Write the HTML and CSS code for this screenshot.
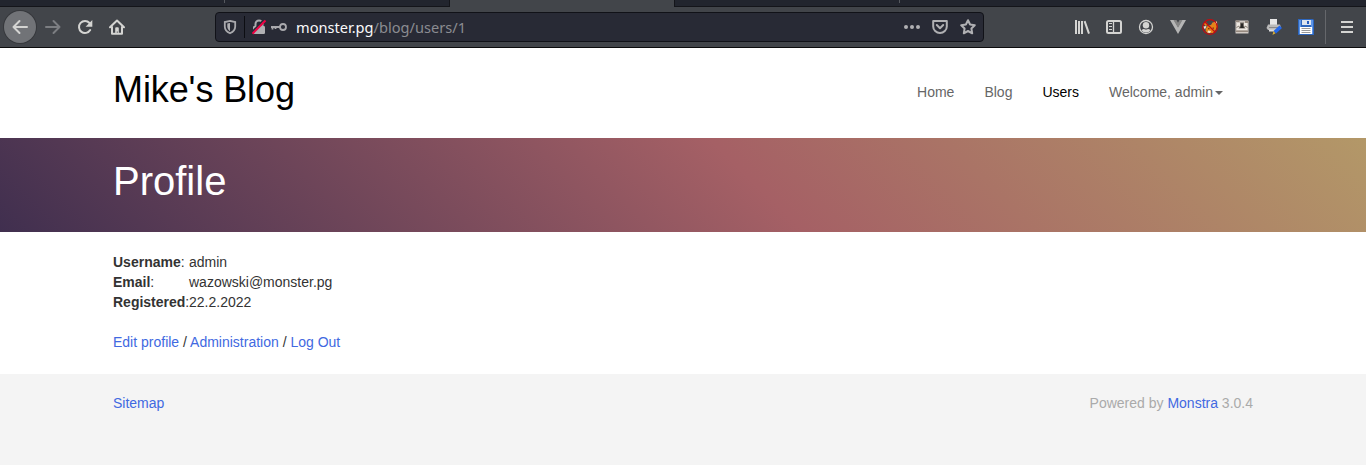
FILE: index.html
```html
<!DOCTYPE html>
<html lang="en">
<head>
<meta charset="utf-8">
<title>Mike's Blog - Profile</title>
<link rel="stylesheet" href="styles.css">
</head>
<body>
<div class="browser">
  <div class="tabs"><span class="tab tab-a"></span><span class="tab tab-b"></span><span class="tab tab-active"></span><span class="tab tab-c"></span><span class="tab tab-rest"></span></div>
  <div class="toolbar">
    <div class="nav-buttons">
      <span class="back"><svg class="icon line" viewBox="0 0 16 16"><path d="M15 8H1.5M7.5 2L1.5 8l6 6"/></svg></span>
      <svg class="icon line dim" viewBox="0 0 16 16"><path d="M1 8h13.5M8.5 2l6 6-6 6"/></svg>
      <svg class="icon line" viewBox="0 0 16 16"><path d="M13.2 11A6 6 0 1 1 12.5 4"/><path class="solid" d="M15.3 1v6.7H8.6z"/></svg>
      <svg class="icon line" viewBox="0 0 16 16"><path d="M1 8.3L8 1.5l7 6.8M3 8v6.7h10V8"/><path class="solid" d="M6.2 15V9.2q0-1 1-1h1.6q1 0 1 1V15H8.700v-2.500H7.800V15z"/></svg>
    </div>
    <div class="urlbar">
      <svg class="icon shield" viewBox="0 0 16 16"><path d="M8 1.800l5.200 1.200v4.500c0 3-2 5.300-5.200 6.800-3.200-1.500-5.200-3.800-5.200-6.800V3z"/><path class="solid" d="M8 4v8.200C6.200 10.900 5.300 9.300 5.300 7.500V4.600z"/></svg>
      <span class="url-rule"></span>
      <svg class="icon lock" viewBox="0 0 16 16"><path class="shackle" d="M4.500 8V5a3.500 3.500 0 0 1 7 0v3"/><rect class="solid" x="2" y="7" width="12" height="8" rx="1.200"/><path class="gap" d="M.2 14L13.500 .2"/><path class="slash" d="M1.500 14.700L14.500 1.500"/></svg>
      <svg class="icon key" viewBox="0 0 16 16"><circle cx="12" cy="8" r="3"/><path d="M9 8H0M1.500 8v2.500M4.500 8v2"/></svg>
      <span class="url">monster.pg<span class="path">/blog/users/1</span></span>
      <svg class="icon solid dots" viewBox="0 0 16 16"><circle cx="2" cy="8" r="2"/><circle cx="8" cy="8" r="2"/><circle cx="14" cy="8" r="2"/></svg>
      <svg class="icon line pale" viewBox="0 0 16 16"><path d="M1.200 2h13.600v5.500a6.800 6.500 0 0 1-13.600 0zM4.800 6L8 9.200 11.200 6"/></svg>
      <svg class="icon line pale star" viewBox="0 0 16 16"><path d="M8 1.200l2.100 4.300 4.700.7-3.400 3.300.8 4.800L8 12l-4.200 2.300.8-4.800L1.200 6.200l4.700-.7z"/></svg>
    </div>
    <div class="extensions">
      <svg class="icon line flat" viewBox="0 0 16 16"><path d="M2 1v14M5 2v13M8 2v13M10.600 2.200L15 14.600"/></svg>
      <svg class="icon line flat" viewBox="0 0 16 16"><rect x="1" y="2" width="14" height="12" rx="1.500"/><path class="thin" d="M7.500 2v12"/><path class="hair" d="M3 4.500h3M3 7.500h3M3 10.500h3"/></svg>
      <svg class="icon line" viewBox="0 0 16 16"><circle class="thin" cx="8" cy="8" r="6.500"/><circle class="solid" cx="8" cy="6.300" r="3.200"/><path class="solid" d="M3.500 11.200q1.500-1.500 2.600-1.200 1.900 1 3.800 0 1.100-.3 2.600 1.200Q11 13.500 8 13.500t-4.500-2.300z"/></svg>
      <svg class="icon" viewBox="0 0 16 16"><path fill="#b5b5b5" d="M0 1h4l4 7 4-7h4L8 15z"/><path fill="#858585" d="M3.500 1h3L8 3.700 9.500 1h3L8 8.700z"/></svg>
      <svg class="icon" viewBox="0 0 16 16"><path fill="#e58319" d="M4 9l2-2.500L9 6l1.500-2.500L15 2.500l.3 4.500-1.800 4-2.500 3-5 .3L3.500 12z"/><path fill="#f4e6d5" d="M1 7.500l3.500-.5L3 10.500zM12.500 3.500l2.500-1-.2 3.500zM6 11.500l3 .5-1 2-2.500-.5z"/><path fill="#e58319" d="M1.500 4.500l3-1L6 6 3.500 7z"/><path fill="#763b14" d="M6 9h1.500v1.300H6zM10.500 8.500H12v1.300h-1.500z"/><circle cx="8" cy="8" r="7.300" fill="none" stroke="#c30c10" stroke-width="1.300"/><path stroke="#c30c10" stroke-width="1.300" d="M3 3l10 10"/></svg>
      <svg class="icon" viewBox="0 0 16 16"><rect x="1.500" y="1.500" width="13" height="13" rx=".5" fill="#d0c9c3"/><path fill="#95897f" d="M1.500 1.500h4v1.500h-4zM11 2h3.500v2H11zM2 11.500h12V13H2z"/><path fill="#eee9e2" d="M3 4h10v7H3z"/><path fill="#77706a" d="M6 3.500h4v3l1.500 3h-7L6 6.500z"/><path fill="#292725" d="M7 4.500h2v2L10 9H6l1-2.500z"/><path stroke="#81776e" d="M2.500 8.500l2.500-1.500M13.500 8.500L11 7"/></svg>
      <svg class="icon" viewBox="0 0 16 16"><path fill="#e6e6e6" d="M4 0h7v6H4z"/><path fill="#bababa" d="M2 5.500h12l1 3-2 2.500H2L.5 9z"/><path fill="#888" d="M3 8h9v1H3z"/><path fill="#ddd" d="M3 10.500h7v2H3z"/><path fill="#2368eb" d="M13.500 6.500L16 9l-6 5.500L7.500 12z"/><path fill="#d8ae38" d="M7.500 12l2 2.300L6.500 16z"/></svg>
      <svg class="icon" viewBox="0 0 16 16"><path fill="#2d66bd" d="M0 0h15l1 1v15H0z"/><path fill="#5b93e6" d="M1 1h2v14H1zM13 1h2v14h-2z"/><path fill="#dce4ef" d="M4 1h9v5H4z"/><path fill="#245cc0" d="M9 2h2v3H9z"/><path fill="#fff" d="M2 8h12v7H2z"/><path stroke="#999" d="M3.500 9.500h9M3.500 11.500h9M3.500 13.500h9"/></svg>
    </div>
    <span class="rule"></span>
    <svg class="icon line menu" viewBox="0 0 16 16"><path d="M2 3h12M2 8h12M2 13h12"/></svg>
  </div>
</div>
<header class="site-header container">
  <a class="brand">Mike's Blog</a>
  <nav class="site-nav"><a>Home</a><a>Blog</a><a class="active">Users</a><a>Welcome, admin<span class="caret"></span></a></nav>
</header>
<section class="banner"><h1 class="container">Profile</h1></section>
<main class="container profile">
  <dl class="details">
    <dt><b>Username</b>:</dt><dd>admin</dd>
    <dt><b>Email</b>:</dt><dd>wazowski@monster.pg</dd>
    <dt><b>Registered</b>:</dt><dd>22.2.2022</dd>
  </dl>
  <div class="actions"><a>Edit profile</a> / <a>Administration</a> / <a>Log Out</a></div>
</main>
<footer class="footer"><div class="container footer-row"><a>Sitemap</a><span class="powered">Powered by <a>Monstra</a> 3.0.4</span></div></footer>
</body>
</html>
```
FILE: styles.css
```css
* { box-sizing: border-box; }
body { margin: 0; height: 465px; overflow: hidden; display: flex; flex-direction: column; background: #fff; color: #333; font: 14px/20px "Liberation Sans", Arial, sans-serif; }
.browser { flex: none; height: 48px; background: #42454a; }
.tabs { height: 7px; display: flex; background: #22252e; }
.tab { height: 7px; border-bottom: 1px solid #14151a; }
.tab-a { width: 225px; }
.tab-b { width: 225px; border-right: 1px solid #14151a; }
.tab-active { width: 224px; background: #42454a; border-color: #42454a; }
.tab-c { width: 226px; border-left: 1px solid #14151a; }
.tab-rest { flex: 1; }
.tab-a, .tab-c { background: linear-gradient(#55585e, #55585e) right top / 1px 3px no-repeat; }
.toolbar { height: 41px; padding-left: 4px; display: flex; align-items: center; border-bottom: 1px solid #0c0c0d; }
.nav-buttons { width: 211px; display: flex; align-items: center; gap: 16px; }
.back { width: 32px; height: 32px; margin-right: -7px; display: grid; place-items: center; border-radius: 50%; background: #717377; box-shadow: 0 0 0 1px #36383c; }
.icon { width: 16px; height: 16px; flex: none; display: block; overflow: visible; }
.line { fill: none; stroke: #d4d4d2; stroke-width: 2; stroke-linejoin: round; stroke-linecap: round; }
.line .solid { fill: #d4d4d2; stroke: none; }
.line .thin { stroke-width: 1.3; }
.line .hair { stroke-width: 1; }
.flat { stroke-linecap: butt; }
.dim { stroke: #7c7e82; }
.pale { stroke: #b0b0b3; }
.urlbar { width: 769px; height: 30px; display: flex; align-items: center; padding: 0 7px 0 6px; border: 1px solid #111218; border-radius: 4px; background: #282a35; }
.shield, .key { fill: none; stroke: #a9a9ad; stroke-width: 1.8; }
.shield .solid, .lock .solid, .dots { fill: #b0b0b3; stroke: none; }
.url-rule { width: 1px; height: 22px; margin: 0 6px; background: #0c0d12; }
.lock { fill: none; stroke-width: 2; }
.shackle { stroke: #a9a9ad; }
.gap { stroke: #282a35; }
.slash { stroke: #f00044; }
.key { margin-left: 4px; }
.url { flex: 1; margin-left: 9px; color: #f9f9fa; font: 14.6px/20px "Noto Sans", sans-serif; }
.path { color: #8b8c91; }
.dots { margin-right: 12px; }
.star { margin-left: 12px; }
.extensions { margin-left: 90px; display: flex; gap: 16px; }
.rule { width: 1px; height: 34px; margin-left: 11px; background: #65676b; }
.menu { margin-left: 13px; stroke-linecap: butt; }
.container { width: 1140px; margin: 0 auto; }
.site-header { height: 90px; flex: none; display: flex; justify-content: space-between; }
.brand { padding-top: 22px; font-size: 36px; line-height: 40px; letter-spacing: -0.1px; color: #000; }
.site-nav { display: flex; gap: 30px; padding: 34px 30px 0 0; color: #666; }
.active { color: #000; }
.caret { display: inline-block; margin-left: 2px; vertical-align: middle; border: 4px solid transparent; border-top-color: #666; border-bottom: 0; }
.banner { height: 94px; flex: none; color: #fff; background: linear-gradient(45deg, #402f4f 0%, #a56065 55%, #b39868 100%); }
.banner h1 { padding-top: 21px; font-size: 40px; line-height: 44px; font-weight: 400; }
.profile { height: 142px; flex: none; padding-top: 20px; }
.details { display: grid; grid-template-columns: 76px 1fr; margin: 0; white-space: nowrap; }
.details dd { margin: 0; }
.actions { margin-top: 20px; }
.actions a, .footer a { color: #4169e1; }
.footer { flex: 1; padding-top: 19px; background: #f4f4f4; }
.footer-row { display: flex; justify-content: space-between; }
.powered { color: #aaa; }
```
